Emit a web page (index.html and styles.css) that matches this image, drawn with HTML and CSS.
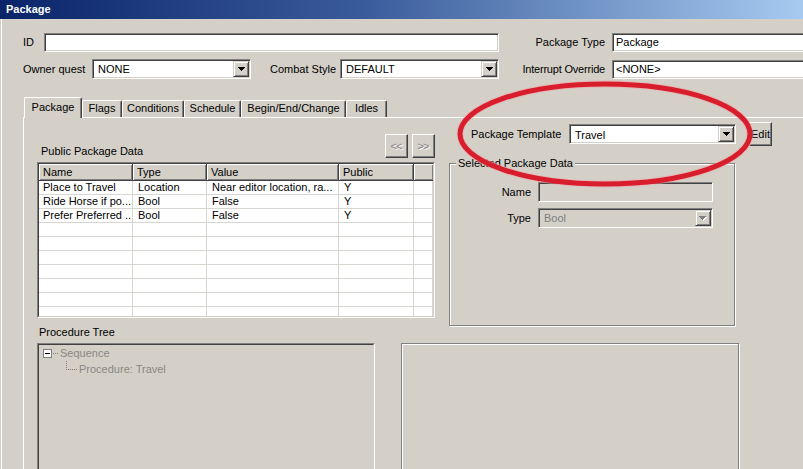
FILE: index.html
```html
<!DOCTYPE html>
<html>
<head>
<meta charset="utf-8">
<title>Package</title>
<link rel="stylesheet" href="styles.css">
</head>
<body>
<div class="window">
  <div class="titlebar">Package</div>
  <div class="client">
    <div class="row row-1">
      <span class="lbl lbl-id">ID</span>
      <div class="edit edit-id"></div>
      <span class="lbl lbl-right">Package Type</span>
      <div class="edit edit-wide">Package</div>
    </div>
    <div class="row row-2">
      <span class="lbl lbl-owner">Owner quest</span>
      <div class="combo combo-sm">
        <span class="combo-val">NONE</span>
        <span class="drop"><svg class="arrow" width="7" height="4" viewBox="0 0 7 4"><path d="M0 0h7v1H0zM1 1h5v1H1zM2 2h3v1H2zM3 3h1v1H3z"/></svg></span>
      </div>
      <span class="lbl lbl-combat">Combat Style</span>
      <div class="combo combo-sm">
        <span class="combo-val">DEFAULT</span>
        <span class="drop"><svg class="arrow" width="7" height="4" viewBox="0 0 7 4"><path d="M0 0h7v1H0zM1 1h5v1H1zM2 2h3v1H2zM3 3h1v1H3z"/></svg></span>
      </div>
      <span class="lbl lbl-right lbl-tight">Interrupt Override</span>
      <div class="edit edit-wide">&lt;NONE&gt;</div>
    </div>

    <div class="tabstrip">
      <div class="tab tab-active t-package">Package</div>
      <div class="tab t-flags">Flags</div>
      <div class="tab t-conditions">Conditions</div>
      <div class="tab t-schedule">Schedule</div>
      <div class="tab t-begin">Begin/End/Change</div>
      <div class="tab t-idles">Idles</div>
    </div>

    <div class="panel">
      <div class="panel-top">
        <div class="col-left">
          <div class="list-head">
            <span class="list-title">Public Package Data</span>
            <div class="btn btn-nav">&lt;&lt;</div>
            <div class="btn btn-nav">&gt;&gt;</div>
          </div>
          <div class="listview">
            <div class="listview-in">
              <table class="grid">
                <thead>
                  <tr><th class="c1">Name</th><th class="c2">Type</th><th class="c3">Value</th><th class="c4">Public</th><th class="c5"></th></tr>
                </thead>
                <tbody>
                  <tr><td>Place to Travel</td><td>Location</td><td>Near editor location, ra...</td><td>Y</td><td></td></tr>
                  <tr><td>Ride Horse if po...</td><td>Bool</td><td>False</td><td>Y</td><td></td></tr>
                  <tr><td>Prefer Preferred ...</td><td>Bool</td><td>False</td><td>Y</td><td></td></tr>
                  <tr><td></td><td></td><td></td><td></td><td></td></tr>
                  <tr><td></td><td></td><td></td><td></td><td></td></tr>
                  <tr><td></td><td></td><td></td><td></td><td></td></tr>
                  <tr><td></td><td></td><td></td><td></td><td></td></tr>
                  <tr><td></td><td></td><td></td><td></td><td></td></tr>
                  <tr><td></td><td></td><td></td><td></td><td></td></tr>
                  <tr><td></td><td></td><td></td><td></td><td></td></tr>
                </tbody>
              </table>
            </div>
          </div>
          <div class="tree-title">Procedure Tree</div>
        </div>

        <div class="col-right">
          <div class="tpl-row">
            <span class="lbl tpl-lbl">Package Template</span>
            <div class="combo combo-tpl">
              <span class="combo-val combo-val-low">Travel</span>
              <span class="drop"><svg class="arrow" width="7" height="4" viewBox="0 0 7 4"><path d="M0 0h7v1H0zM1 1h5v1H1zM2 2h3v1H2zM3 3h1v1H3z"/></svg></span>
            </div>
            <div class="btn btn-edit">Edit</div>
          </div>
          <div class="group">
            <div class="group-title">Selected Package Data</div>
            <div class="grow grow-first">
              <span class="lbl glbl">Name</span>
              <div class="edit edit-dis"></div>
            </div>
            <div class="grow">
              <span class="lbl glbl">Type</span>
              <div class="combo combo-dis">
                <span class="combo-val">Bool</span>
                <span class="drop"><svg class="arrow arrow-dis" width="8" height="5" viewBox="0 0 8 5"><path class="hl" d="M1 1h7v1H1zM2 2h5v1H2zM3 3h3v1H3zM4 4h1v1H4z"/><path d="M0 0h7v1H0zM1 1h5v1H1zM2 2h3v1H2zM3 3h1v1H3z"/></svg></span>
              </div>
            </div>
          </div>
        </div>
      </div>

      <div class="panel-bottom">
        <div class="tree">
          <div class="tree-in">
            <div class="tree-row">
              <span class="expander"></span>
              <span class="dots-h"></span>
              <span class="tree-text">Sequence</span>
            </div>
            <div class="tree-row tree-child">
              <span class="elbow"></span>
              <span class="tree-text">Procedure: Travel</span>
            </div>
          </div>
        </div>
        <div class="etched-box"></div>
      </div>
    </div>
  </div>

  <svg class="annotation" width="803" height="469" viewBox="0 0 803 469">
    <ellipse cx="605" cy="134" rx="145" ry="50" fill="none" stroke="#f3a0a6" stroke-width="7" opacity="0.5"/>
    <ellipse cx="605" cy="134" rx="145" ry="50" fill="none" stroke="#d81e2c" stroke-width="5"/>
  </svg>
</div>
</body>
</html>
```

FILE: styles.css
```css
* {
  box-sizing: border-box;
  margin: 0;
  padding: 0;
}

html, body {
  width: 803px;
  height: 469px;
  overflow: hidden;
}

body {
  background: #d4d0c8;
  font-family: "Liberation Sans", Arial, sans-serif;
  font-size: 11px;
  line-height: 13px;
  color: #000;
}

.window {
  position: relative;
  width: 803px;
  height: 469px;
  overflow: hidden;
  background: #d4d0c8;
}

.titlebar {
  height: 19px;
  padding: 1px 0 0 6px;
  line-height: 17px;
  font-weight: bold;
  color: #fff;
  background: linear-gradient(90deg, #0a246a 0%, #3a5b9b 45%, #a6caf0 100%);
}

.client {
  margin-left: 1px;
  border-left: 1px solid #fff;
  height: 450px;
  padding: 14px 0 0 21px;
}

/* ---------- generic controls ---------- */
.lbl {
  flex: none;
  white-space: nowrap;
}

.row {
  display: flex;
  align-items: center;
}

.row-1 { height: 19px; }
.row-2 { height: 20px; margin-top: 7px; }

.edit {
  flex: none;
  height: 19px;
  border: 1px solid;
  border-color: #808080 #fff #fff #808080;
  box-shadow: inset 1px 1px 0 #404040, inset -1px -1px 0 #d4d0c8;
  background: #fff;
  padding: 1px 0 0 3px;
  line-height: 15px;
  white-space: nowrap;
  overflow: hidden;
}

.combo {
  flex: none;
  display: flex;
  height: 20px;
  border: 1px solid;
  border-color: #808080 #fff #fff #808080;
  box-shadow: inset 1px 1px 0 #404040, inset -1px -1px 0 #d4d0c8;
  background: #fff;
  padding: 1px;
}

.combo-val {
  flex: 1;
  padding-left: 4px;
  line-height: 16px;
  white-space: nowrap;
  overflow: hidden;
}

.combo-val-low {
  padding-top: 1px;
}

.drop {
  flex: none;
  width: 16px;
  height: 16px;
  display: flex;
  align-items: center;
  justify-content: center;
  background: #d4d0c8;
  border: 1px solid;
  border-color: #d4d0c8 #404040 #404040 #d4d0c8;
  box-shadow: inset 1px 1px 0 #fff, inset -1px -1px 0 #808080;
}

.arrow {
  display: block;
  fill: #000;
  shape-rendering: crispEdges;
}

.arrow-dis { fill: #808080; }
.arrow-dis .hl { fill: #fff; }

.btn {
  flex: none;
  display: flex;
  align-items: center;
  justify-content: center;
  background: #d4d0c8;
  border: 1px solid;
  border-color: #fff #404040 #404040 #fff;
  box-shadow: inset -1px -1px 0 #808080;
  white-space: nowrap;
}

/* ---------- top fields ---------- */
.lbl-id { width: 21px; }
.edit-id { width: 455px; }
.lbl-right {
  width: 113px;
  text-align: right;
  padding-right: 7px;
}
.lbl-tight { letter-spacing: -0.2px; }
.edit-wide { width: 200px; }
.lbl-owner { width: 69px; }
.combo-sm { width: 159px; }
.lbl-combat {
  width: 70px;
  margin-left: 19px;
}

/* ---------- tabs ---------- */
.tabstrip {
  display: flex;
  align-items: flex-end;
  height: 20px;
  margin-top: 18px;
  padding-left: 1px;
}

.tab {
  flex: none;
  height: 17px;
  padding-top: 1px;
  text-align: center;
  white-space: nowrap;
  border-top: 1px solid #fff;
  border-left: 1px solid #fff;
  border-right: 1px solid #404040;
  box-shadow: inset -1px 0 0 #808080;
  border-radius: 2px 2px 0 0;
  background: #d4d0c8;
}

.tab-active {
  position: relative;
  z-index: 1;
  height: 21px;
  margin-bottom: -1px;
  padding-top: 3px;
}

.t-package { width: 58px; }
.t-flags { width: 40px; }
.t-conditions { width: 62px; }
.t-schedule { width: 57px; }
.t-begin { width: 105px; }
.t-idles { width: 41px; }

.panel {
  border-top: 1px solid #fff;
  border-left: 1px solid #fff;
  height: 360px;
  width: 800px;
}

.panel-top {
  display: flex;
  padding-left: 13px;
}

/* ---------- left column ---------- */
.col-left {
  flex: none;
  width: 398px;
  padding-top: 16px;
}

.list-head {
  display: flex;
  align-items: flex-end;
  height: 24px;
  gap: 4px;
}

.list-title {
  flex: 1;
  padding-left: 4px;
}

.btn-nav {
  width: 23px;
  height: 24px;
  color: #808080;
  text-shadow: 1px 1px 0 #fff;
  font-size: 11px;
  letter-spacing: -1px;
  padding-right: 1px;
}

.listview {
  margin-top: 4px;
  height: 156px;
  border: 1px solid;
  border-color: #808080 #fff #fff #808080;
}

.listview-in {
  height: 100%;
  border: 1px solid;
  border-color: #404040 #d4d0c8 #d4d0c8 #404040;
  background: #fff;
  overflow: hidden;
}

.grid {
  width: 394px;
  table-layout: fixed;
  border-collapse: separate;
  border-spacing: 0;
}

.grid th {
  box-sizing: border-box;
  height: 17px;
  line-height: 16px;
  padding: 0 0 0 4px;
  font-weight: normal;
  text-align: left;
  background: #d4d0c8;
  border-right: 1px solid #404040;
  border-bottom: 1px solid #404040;
  box-shadow: inset 1px 1px 0 #fff, inset -1px -1px 0 #808080;
  white-space: nowrap;
  overflow: hidden;
}

.grid th.c5 {
  border-right: none;
}

.grid .c1 { width: 94px; }
.grid .c2 { width: 74px; }
.grid .c3 { width: 132px; }
.grid .c4 { width: 75px; }
.grid .c5 { width: 19px; }

.grid td {
  box-sizing: border-box;
  height: 14px;
  line-height: 13px;
  padding: 0 0 0 5px;
  border-right: 1px solid #d8d6d0;
  border-bottom: 1px solid #d8d6d0;
  white-space: nowrap;
  overflow: hidden;
}

.grid td:first-child {
  padding-left: 4px;
}

.tree-title {
  margin-top: 8px;
  padding-left: 2px;
}

/* ---------- right column ---------- */
.col-right {
  flex: none;
  width: 330px;
  margin-left: 14px;
  padding-top: 4px;
}

.tpl-row {
  display: flex;
  align-items: center;
  height: 24px;
}

.tpl-lbl {
  width: 98px;
  margin-left: 22px;
}

.combo-tpl { width: 167px; }

.btn-edit {
  width: 23px;
  height: 24px;
  margin-left: 13px;
}

.group {
  margin-top: 17px;
  width: 286px;
  height: 163px;
  border: 1px solid #808080;
  box-shadow: inset 1px 1px 0 #fff, 1px 1px 0 #fff;
}

.group-title {
  width: fit-content;
  margin: -7px 0 0 6px;
  padding: 0 2px;
  background: #d4d0c8;
  line-height: 13px;
}

.grow {
  display: flex;
  align-items: center;
  height: 20px;
  margin-top: 6px;
}

.grow-first { margin-top: 12px; }

.glbl {
  width: 81px;
  text-align: right;
  margin-right: 7px;
}

.edit-dis {
  width: 175px;
  height: 20px;
  background: #d4d0c8;
}

.combo-dis {
  width: 175px;
  background: #d4d0c8;
  color: #808080;
}

/* ---------- bottom ---------- */
.panel-bottom {
  display: flex;
  margin-top: 4px;
  padding-left: 13px;
}

.tree {
  flex: none;
  width: 338px;
  height: 140px;
  border: 1px solid;
  border-color: #808080 #fff #fff #808080;
}

.tree-in {
  height: 100%;
  border: 1px solid;
  border-color: #404040 #d4d0c8 #d4d0c8 #404040;
  background: #d4d0c8;
  padding-left: 4px;
}

.tree-row {
  display: flex;
  align-items: center;
  height: 16px;
  color: #8a8883;
}

.expander {
  flex: none;
  width: 9px;
  height: 9px;
  border: 1px solid #808080;
  background: #fff;
  display: flex;
  align-items: center;
  justify-content: center;
}

.expander::after {
  content: "";
  width: 5px;
  height: 1px;
  background: #000;
}

.dots-h {
  flex: none;
  width: 5px;
  margin-left: 1px;
  border-top: 1px dotted #808080;
}

.tree-text {
  margin-left: 2px;
  white-space: nowrap;
}

.tree-child {
  padding-left: 23px;
  align-items: flex-start;
}

.elbow {
  flex: none;
  width: 11px;
  height: 9px;
  border-left: 1px dotted #808080;
  border-bottom: 1px dotted #808080;
}

.tree-child .tree-text {
  line-height: 16px;
}

.etched-box {
  flex: none;
  width: 338px;
  height: 140px;
  margin-left: 26px;
  border: 1px solid #808080;
  box-shadow: inset 1px 1px 0 #fff, 1px 1px 0 #fff;
}

/* ---------- annotation overlay ---------- */
.annotation {
  position: absolute;
  left: 0;
  top: 0;
  pointer-events: none;
}
```
